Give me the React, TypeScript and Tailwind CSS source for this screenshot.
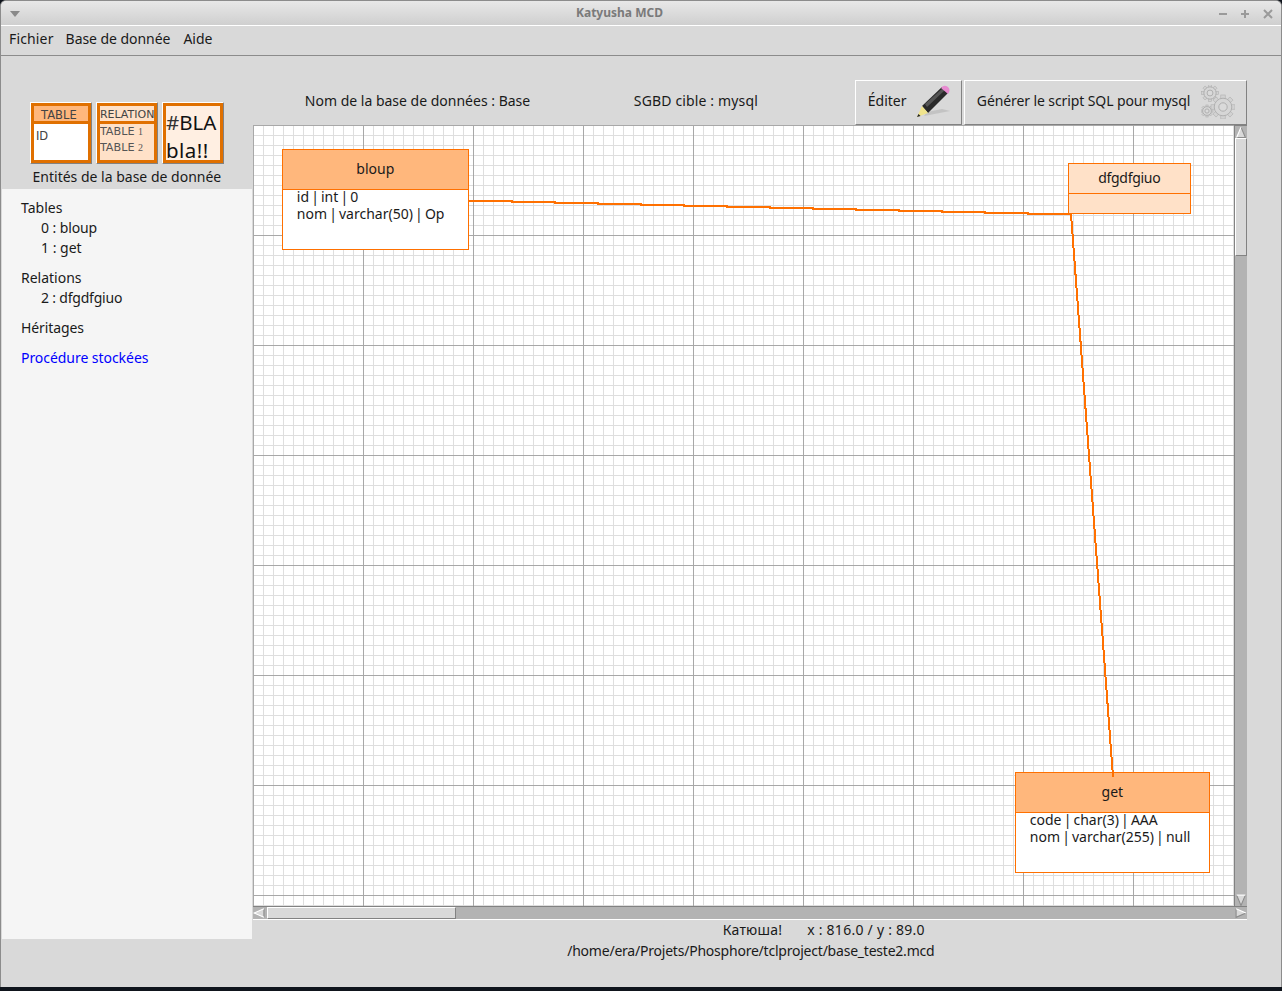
import type { ReactNode } from "react";

type EntityProps = {
  name: string;
  lines?: string[];
  className: string;
  headClassName: string;
};

function Entity({ name, lines = [], className, headClassName }: EntityProps) {
  return (
    <div className={`absolute flex flex-col border border-[#ff7000] ${className}`}>
      <div className={`flex items-center justify-center border-b border-[#ff7000] pb-[2px] text-[14px] text-[#1a1a1a] ${headClassName}`}>
        {name}
      </div>
      <div className="mt-[-2px] flex-1 pl-[14px] text-[14px] leading-[17px] text-[#1a1a1a] [word-spacing:-1.5px]">
        {lines.map((line) => (
          <div key={line}>{line}</div>
        ))}
      </div>
    </div>
  );
}

function Raised({ className, children }: { className: string; children?: ReactNode }) {
  return (
    <div className={`border border-t-white border-l-white border-r-[#828282] border-b-[#828282] ${className}`}>
      {children}
    </div>
  );
}

function Pencil() {
  return (
    <svg width="36" height="36" viewBox="0 0 36 36">
      <path d="M8 32 L34 27 L26 25 L11 28 Z" fill="#b9b9b9" opacity="0.7" />
      <path d="M6 22 L26 3 L32 9 L12 29 Z" fill="#2a2a2a" />
      <path d="M9 20 L27 4 L29 6 L11 23 Z" fill="#555555" />
      <path d="M25 4 Q28 0 32 3 Q35 6 32 10 Z" fill="#e78ad0" />
      <path d="M6 22 L12 29 L1 33 Z" fill="#f0e48c" />
      <path d="M2.5 30 L4.5 32 L1 33 Z" fill="#222222" />
    </svg>
  );
}

function Gear({ x, y, r, teeth }: { x: number; y: number; r: number; teeth: number }) {
  const spokes = Array.from({ length: teeth }, (_, i) => (i * 360) / teeth);
  return (
    <g transform={`translate(${x} ${y})`}>
      {spokes.map((a) => (
        <rect key={a} x={-r * 0.22} y={-r * 1.2} width={r * 0.44} height={r * 0.5} fill="#d2d2d2" stroke="#b0b0b0" strokeWidth="0.6" transform={`rotate(${a})`} />
      ))}
      <circle r={r * 0.88} fill="#d6d6d6" stroke="#b0b0b0" strokeWidth="1" />
      <circle r={r * 0.42} fill="#dadada" stroke="#b0b0b0" strokeWidth="1" />
    </g>
  );
}

function Gears() {
  return (
    <svg width="34" height="34" viewBox="0 0 34 34">
      <Gear x={9} y={8} r={7} teeth={8} />
      <Gear x={6} y={26} r={5} teeth={8} />
      <Gear x={22} y={22} r={10} teeth={8} />
    </svg>
  );
}

function ScrollArrow({ direction }: { direction: "up" | "down" | "left" | "right" }) {
  const shape = {
    up: { fill: "1.5,10.5 5.5,1 9.5,10.5", light: "1.5,10.5 5.5,1", dark: "5.5,1 9.5,10.5 1.5,10.5" },
    down: { fill: "1.5,1 5.5,10.5 9.5,1", light: "1.5,1 9.5,1", dark: "9.5,1 5.5,10.5 1.5,1" },
    left: { fill: "10,1.5 1,5.5 10,9.5", light: "10,1.5 1,5.5 10,9.5", dark: "10,1.5 10,9.5" },
    right: { fill: "1,1.5 10,5.5 1,9.5", light: "1,1.5 10,5.5", dark: "10,5.5 1,9.5 1,1.5" },
  }[direction];
  return (
    <svg width="12" height="12" viewBox="0 0 11 11" className="shrink-0 bg-[#b3b3b3]">
      <polygon points={shape.fill} fill="#d9d9d9" />
      <polyline points={shape.dark} fill="none" stroke="#8c8c8c" strokeWidth="1" />
      <polyline points={shape.light} fill="none" stroke="#ffffff" strokeWidth="1" />
    </svg>
  );
}

function Toolbox() {
  return (
    <div className="flex gap-[4px] font-['DejaVu_Sans',sans-serif]">
      <Raised className="size-[62px] bg-[#d9d9d9]">
        <div className="flex size-full flex-col border-[3px] border-[#e07000] bg-white">
          <div className="flex h-[18px] items-center justify-center border-b-[3px] border-[#e07000] bg-[#ffb77c] pr-[4px] pt-[4px] text-[11.5px] text-[#444444]">
            TABLE
          </div>
          <div className="pl-[2px] pt-[5px] text-[11.5px] leading-[15px] text-[#444444]">ID</div>
        </div>
      </Raised>
      <Raised className="size-[62px] bg-[#d9d9d9]">
        <div className="flex size-full flex-col border-[3px] border-[#e07000] bg-[#ffe1c8]">
          <div className="box-content h-[15px] whitespace-nowrap border-b-[3px] border-[#e07000] text-center text-[11px] leading-[17px] text-[#444444]">
            RELATION
          </div>
          <div className="text-[11.2px] leading-[16px] text-[#555555]">
            <div>TABLE <span className="font-['Liberation_Serif',serif] text-[10px]">1</span></div>
            <div>TABLE <span className="font-['Liberation_Serif',serif] text-[10px]">2</span></div>
          </div>
        </div>
      </Raised>
      <Raised className="size-[62px] bg-[#d9d9d9]">
        <div className="size-full border-[3px] border-[#e07000] bg-[#ffefe2] pt-[2px] font-['Noto_Sans',sans-serif] text-[20.5px] leading-[28px] text-[#111111]">
          <div className="whitespace-nowrap"><span className="text-[#333333]">#</span>BLA</div>
          <div className="tracking-[0.5px]">bla!!</div>
        </div>
      </Raised>
    </div>
  );
}

function Sidebar() {
  return (
    <div className="flex w-[250px] flex-col">
      <div className="flex h-[133px] flex-col items-center justify-end">
        <Toolbox />
        <div className="mb-[2px] mt-[3px] text-[14px] leading-[20px] text-[#1a1a1a]">Entités de la base de donnée</div>
      </div>
      <div className="h-[750px] bg-[#f5f5f5] pl-[19px] pt-[1px] text-[14px] leading-[20px] text-[#1a1a1a]">
        <div className="mt-[8px]">Tables</div>
        <div className="pl-[20px] tracking-[-0.1px]">0 : bloup</div>
        <div className="pl-[20px]">1 : get</div>
        <div className="mt-[10px]">Relations</div>
        <div className="pl-[20px] tracking-[-0.2px]">2 : dfgdfgiuo</div>
        <div className="mt-[10px] tracking-[-0.1px]">Héritages</div>
        <div className="mt-[10px] text-[#0000ff] tracking-[-0.05px]">Procédure stockées</div>
      </div>
    </div>
  );
}

function Canvas() {
  return (
    <div className="relative h-[781px] w-[981px] overflow-hidden bg-white bg-[linear-gradient(to_right,#a8a8a8_1px,transparent_1px),linear-gradient(to_bottom,#a8a8a8_1px,transparent_1px),linear-gradient(to_right,#dedede_1px,transparent_1px),linear-gradient(to_bottom,#dedede_1px,transparent_1px)] bg-[size:110px_110px,110px_110px,10px_10px,10px_10px]">
      <svg width="981" height="781" className="absolute left-0 top-0" shapeRendering="crispEdges">
        <polyline
          points="216,76 259,76 259,77 302,77 302,78 345,78 345,79 388,79 388,80 431,80 431,81 474,81 474,82 517,82 517,83 560,83 560,84 603,84 603,85 646,85 646,86 689,86 689,87 732,87 732,88 775,88 775,89 818,89"
          fill="none"
          stroke="#ff7000"
          strokeWidth="2"
        />
      </svg>
      <Entity
        name="bloup"
        lines={["id | int | 0", "nom | varchar(50) | Op"]}
        className="left-[29px] top-[24px] h-[101px] w-[187px] bg-white"
        headClassName="h-[40px] bg-[#ffb77c]"
      />
      <Entity
        name="dfgdfgiuo"
        className="left-[815px] top-[38px] h-[51px] w-[123px] bg-[#ffe1c8]"
        headClassName="h-[30px] tracking-[-0.3px]"
      />
      <Entity
        name="get"
        lines={["code | char(3) | AAA", "nom | varchar(255) | null"]}
        className="left-[762px] top-[647px] h-[101px] w-[195px] bg-white"
        headClassName="h-[40px] bg-[#ffb77c]"
      />
      <svg width="981" height="781" className="absolute left-0 top-0" shapeRendering="crispEdges">
        <line x1="818" y1="89" x2="860" y2="652" stroke="#ff7000" strokeWidth="2" />
      </svg>
    </div>
  );
}

function VerticalScrollbar() {
  return (
    <div className="flex h-[781px] w-[13px] flex-col border-l border-t border-l-[#828282] border-t-[#828282] bg-[#b3b3b3]">
      <ScrollArrow direction="up" />
      <Raised className="h-[118px] w-[12px] shrink-0 bg-[#d9d9d9]" />
      <div className="flex-1" />
      <ScrollArrow direction="down" />
    </div>
  );
}

function HorizontalScrollbar() {
  return (
    <div className="flex h-[14px] w-[994px] border-y border-t-[#828282] border-b-white bg-[#b3b3b3]">
      <ScrollArrow direction="left" />
      <Raised className="ml-[2px] h-[12px] w-[189px] shrink-0 bg-[#d9d9d9]" />
      <div className="flex-1" />
      <ScrollArrow direction="right" />
    </div>
  );
}

function Workspace() {
  return (
    <div className="ml-[1px] flex w-[1029px] flex-col">
      <div className="flex h-[69px] items-end">
        <div className="flex h-[50px] items-center text-[14px] text-[#1a1a1a]">
          <div className="ml-[52px] w-[329px]">Nom de la base de données : Base</div>
          <div className="w-[221px] tracking-[0.15px]">SGBD cible : mysql</div>
        </div>
        <Raised className="flex h-[45px] w-[107px] items-center bg-[#d9d9d9] pb-[4px] pl-[12px] text-[14px] text-[#1a1a1a]">
          <span className="flex-1">Éditer</span>
          <span className="mr-[9px] mt-[3px]"><Pencil /></span>
        </Raised>
        <Raised className="ml-[2px] flex h-[45px] w-[283px] items-center bg-[#d9d9d9] pb-[4px] pl-[12px] text-[14px] text-[#1a1a1a]">
          <span className="flex-1 whitespace-nowrap tracking-[-0.1px]">Générer le script SQL pour mysql</span>
          <span className="mr-[11px] mt-[3px]"><Gears /></span>
        </Raised>
      </div>
      <div className="flex">
        <Canvas />
        <VerticalScrollbar />
      </div>
      <HorizontalScrollbar />
      <div className="mt-[-1px] w-[994px] text-center text-[14px] leading-[21px] text-[#1a1a1a]">
        <div className="pl-[148px]">
          <span className="tracking-[0.2px]">Катюша!</span>
          <span className="ml-[25px] tracking-[0.25px]">x : 816.0 / y : 89.0</span>
        </div>
        <div className="pl-[2px] tracking-[-0.22px]">/home/era/Projets/Phosphore/tclproject/base_teste2.mcd</div>
      </div>
    </div>
  );
}

export default function App() {
  return (
    <div className="flex h-[991px] w-[1282px] flex-col overflow-hidden bg-[#0f141c] font-['Noto_Sans',sans-serif]">
      <div className="flex h-[987px] flex-col overflow-hidden rounded-t-[6px] border-x border-t border-[#8c8c8c] bg-[#d9d9d9]">
        <div className="relative flex h-[24px] shrink-0 items-center bg-gradient-to-b from-[#e8e8e8] to-[#cfcfcf] pl-[575px] text-[12px] font-bold text-[#7a7a7a]">
          <svg width="10" height="6" viewBox="0 0 10 6" className="absolute left-[9px] top-[10px]">
            <polygon points="0,0 10,0 5,6" fill="#8a8a8a" />
          </svg>
          Katyusha MCD
          <svg width="56" height="12" viewBox="0 0 56 12" className="absolute right-[6px] top-[7px]" fill="none" stroke="#9a9a9a" strokeWidth="2">
            <path d="M0 6 H8" />
            <path d="M22 6 H30 M26 2 V10" />
            <path d="M45 2 L53 10 M53 2 L45 10" />
          </svg>
        </div>
        <div className="flex h-[31px] shrink-0 items-center gap-[12px] border-y border-t-white border-b-[#8c8c8c] bg-[#d9d9d9] pb-[4px] pl-[8px] text-[14px] text-[#1a1a1a]">
          <span className="tracking-[0.15px]">Fichier</span>
          <span className="mr-[1px] tracking-[-0.05px]">Base de donnée</span>
          <span>Aide</span>
        </div>
        <div className="flex flex-1 bg-[#d9d9d9] pl-[1px]">
          <Sidebar />
          <Workspace />
        </div>
      </div>
    </div>
  );
}
